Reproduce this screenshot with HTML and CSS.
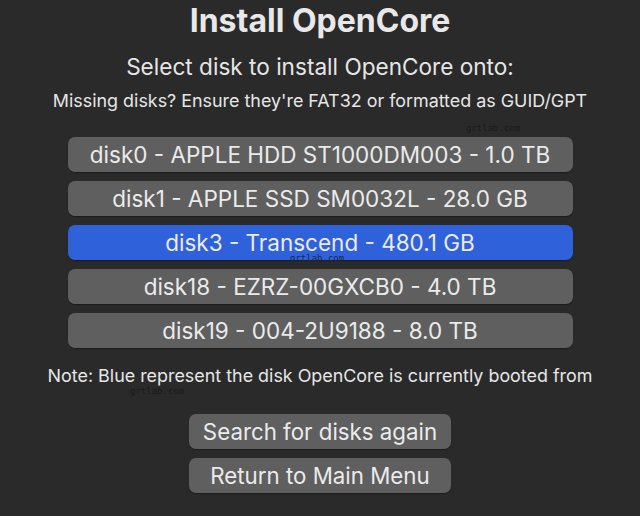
FILE: index.html
```html
<!DOCTYPE html>
<html>
<head>
<meta charset="utf-8">
<link rel="stylesheet" href="styles.css">
</head>
<body>
<main class="screen">
  <h1 class="title">Install OpenCore</h1>
  <p class="subtitle">Select disk to install OpenCore onto:</p>
  <p class="hint">Missing disks? Ensure they're FAT32 or formatted as GUID/GPT</p>
  <div class="disks">
    <button class="disk">disk0 - APPLE HDD ST1000DM003 - 1.0 TB</button>
    <button class="disk">disk1 - APPLE SSD SM0032L - 28.0 GB</button>
    <button class="disk disk-booted">disk3 - Transcend - 480.1 GB</button>
    <button class="disk">disk18 - EZRZ-00GXCB0 - 4.0 TB</button>
    <button class="disk">disk19 - 004-2U9188 - 8.0 TB</button>
  </div>
  <p class="note">Note: Blue represent the disk OpenCore is currently booted from</p>
  <div class="actions">
    <button class="action">Search for disks again</button>
    <button class="action">Return to Main Menu</button>
  </div>
  <span class="mark mark-1">grtlab.com</span>
  <span class="mark mark-2">grtlab.com</span>
  <span class="mark mark-3">grtlab.com</span>
</main>
</body>
</html>
```

FILE: styles.css
```css
html, body {
  margin: 0;
  padding: 0;
  background: #2a2a2a;
}
.screen {
  position: relative;
  width: 640px;
  height: 516px;
  display: flex;
  flex-direction: column;
  align-items: center;
  font-family: Inter, "Noto Sans", sans-serif;
  color: #e6e6e6;
  overflow: hidden;
}
.title {
  margin: 3px 0 0;
  font-size: 32px;
  line-height: 36px;
  font-weight: 700;
  color: #e8e8e8;
}
.subtitle {
  margin: 15px 0 0;
  font-size: 22.6px;
  line-height: 26px;
}
.hint {
  margin: 11px 0 0;
  font-size: 17.9px;
  line-height: 20px;
}
.disks {
  margin-top: 26px;
  display: flex;
  flex-direction: column;
  gap: 9px;
  width: 505px;
}
.disk, .action {
  height: 35px;
  border: none;
  border-radius: 7px;
  background: #5f5f5f;
  color: #ebebeb;
  font-family: inherit;
  font-size: 22.5px;
  padding: 0;
  box-shadow: 0 1px 1px rgba(0,0,0,0.35);
}
.action {
  font-size: 22.3px;
}
.disk-booted {
  background: #2f62da;
}
.note {
  margin: 18px 0 0;
  font-size: 17.9px;
  line-height: 20px;
}
.actions {
  margin-top: 28px;
  display: flex;
  flex-direction: column;
  gap: 9px;
  width: 262px;
}
.mark {
  position: absolute;
  font-family: "DejaVu Sans Mono", monospace;
  font-size: 9px;
  line-height: 9px;
  color: #1a1a1a;
}
.mark-1 { left: 466px; top: 124px; }
.mark-2 { left: 290px; top: 254px; color: #1e2640; }
.mark-3 { left: 130px; top: 387px; }
```
